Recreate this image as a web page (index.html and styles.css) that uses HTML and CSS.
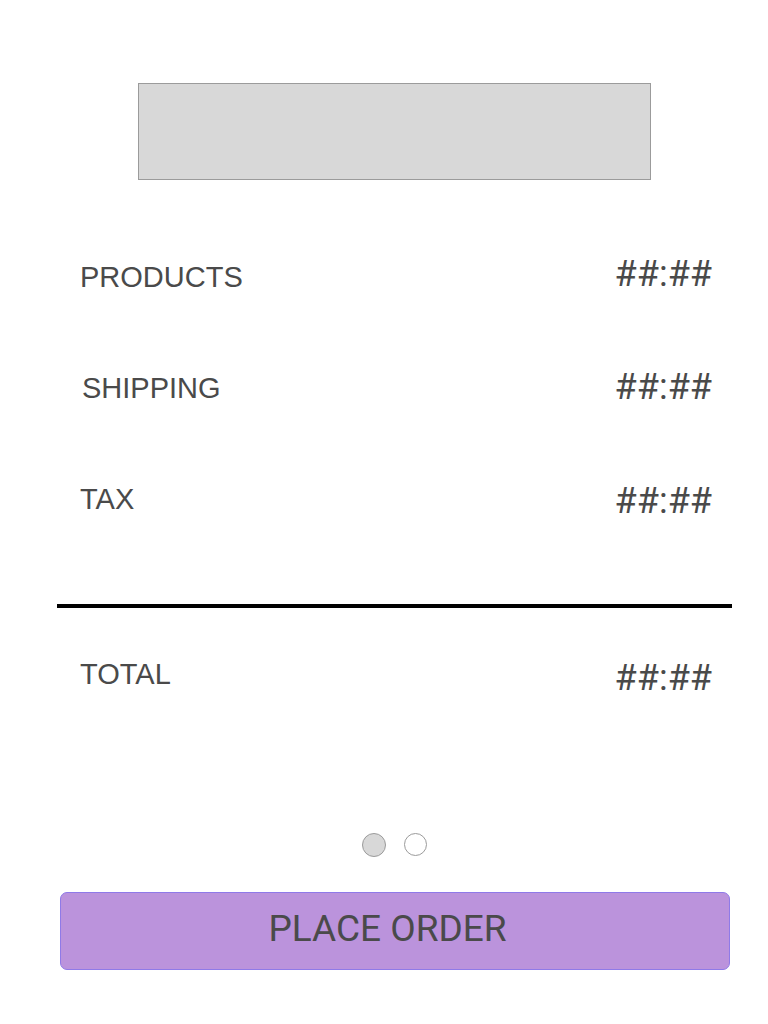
FILE: index.html
```html
<!DOCTYPE html>
<html lang="en">
<head>
<meta charset="utf-8">
<title>Order summary</title>
<link rel="stylesheet" href="styles.css">
</head>
<body>
<main class="page">
  <div class="banner"></div>
  <section class="lines">
    <div class="row row-products">
      <span class="label">PRODUCTS</span>
      <span class="value">##:##</span>
    </div>
    <div class="row row-shipping">
      <span class="label label-shift">SHIPPING</span>
      <span class="value">##:##</span>
    </div>
    <div class="row row-tax">
      <span class="label">TAX</span>
      <span class="value">##:##</span>
    </div>
  </section>
  <hr class="divider">
  <div class="row row-total">
    <span class="label">TOTAL</span>
    <span class="value">##:##</span>
  </div>
  <div class="dots">
    <span class="dot dot-active"></span>
    <span class="dot"></span>
  </div>
  <button class="order-btn" type="button">PLACE ORDER</button>
</main>
</body>
</html>
```

FILE: styles.css
```css
html, body {
  margin: 0;
  padding: 0;
  background: #ffffff;
}

.page {
  width: 768px;
  min-height: 1024px;
  display: flex;
  flex-direction: column;
  color: #4a4a4a;
  font-family: "Liberation Sans", Arial, sans-serif;
}

.banner {
  box-sizing: border-box;
  width: 513px;
  height: 97px;
  margin: 83px 0 0 138px;
  background: #d8d8d8;
  border: 1px solid #9b9b9b;
}

.lines {
  display: flex;
  flex-direction: column;
  margin-top: 41px;
}

.row {
  display: flex;
  justify-content: space-between;
  align-items: center;
  height: 111px;
  padding: 0 56px 0 80px;
}

.label {
  font-size: 29px;
  line-height: 34px;
}

.label-shift {
  margin-left: 2px;
}

.value {
  font-family: Roboto, "Liberation Sans", sans-serif;
  font-size: 36px;
  line-height: 40px;
}

.row-products .value { margin-top: -6px; }
.row-shipping .value { margin-top: -2px; }
.row-tax .value { margin-top: 5px; }

.divider {
  box-sizing: border-box;
  width: 675px;
  height: 4px;
  margin: 50px 0 0 57px;
  border: 0;
  background: #000000;
}

.row-total {
  height: 134px;
  margin-top: 0;
}

.row-total .label { margin-top: -2px; }
.row-total .value { margin-top: 6px; }

.dots {
  display: flex;
  justify-content: center;
  gap: 18px;
  margin-top: 91px;
  padding-left: 20px;
}

.dot {
  box-sizing: border-box;
  width: 23px;
  height: 23px;
  border-radius: 50%;
  border: 1px solid #9b9b9b;
  background: #ffffff;
}

.dot-active {
  width: 24px;
  height: 24px;
  background: #d8d8d8;
}

.order-btn {
  box-sizing: border-box;
  width: 670px;
  height: 78px;
  margin: 35px 0 0 60px;
  padding: 0 15px 4px 0;
  background: #bb93dc;
  border: 1px solid #8f7ae8;
  border-radius: 7px;
  color: #4a4a4a;
  font-family: Roboto, "Liberation Sans", sans-serif;
  font-size: 37px;
  line-height: 40px;
  cursor: pointer;
}
```
